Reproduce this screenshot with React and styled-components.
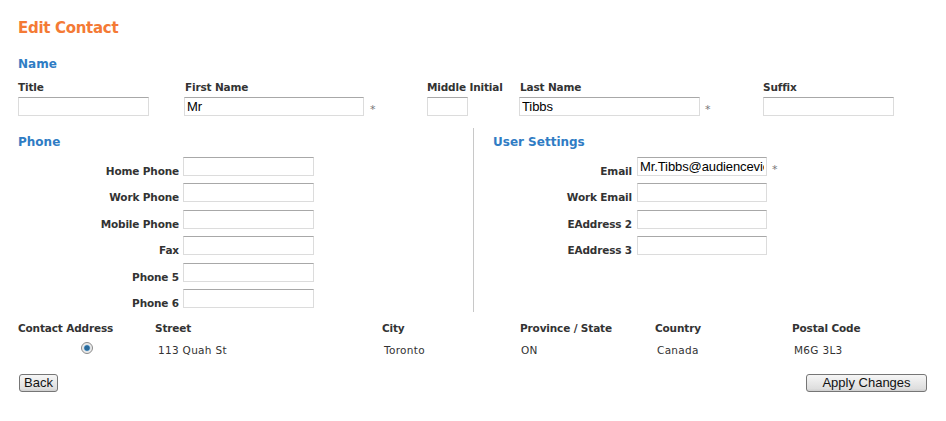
import React from "react";
import styled, { createGlobalStyle } from "styled-components";

const Global = createGlobalStyle`
  html, body { margin: 0; padding: 0; background: #fff; }
  body { font-family: "DejaVu Sans", Verdana, sans-serif; color: #333; }
  * { box-sizing: border-box; }
`;

const Page = styled.div`
  padding: 18px 19px 20px 18px;
  width: 946px;
`;

const Title = styled.h1`
  margin: 0;
  font-size: 15px;
  line-height: 20px;
  font-weight: bold;
  letter-spacing: -0.3px;
  color: #f47a35;
`;

const SectionHead = styled.h2`
  margin: ${(p) => p.$mt || 0}px 0 0 0;
  font-size: 12px;
  line-height: 16px;
  font-weight: bold;
  color: #2f7cc4;
`;

const NameGrid = styled.div`
  margin-top: 8px;
  display: grid;
  grid-template-columns: 166px 243px 92px 244px 1fr;
  row-gap: 3px;
`;

const Label = styled.label`
  font-size: 10.5px;
  line-height: 14px;
  font-weight: bold;
  letter-spacing: -0.15px;
  color: #333;
  white-space: nowrap;
  padding-left: ${(p) => p.$pl || 0}px;
`;

const FieldWrap = styled.div`
  display: flex;
  align-items: center;
`;

const TextInput = styled.input`
  width: ${(p) => p.$w}px;
  height: 19px;
  margin: 0;
  padding: 0 2px;
  border: 1px solid #dcdcdc;
  border-top-color: #a8a8a8;
  font-family: "Liberation Sans", Arial, sans-serif;
  font-size: 13px;
  letter-spacing: -0.1px;
  color: #000;
  background: #fff;
  outline: none;
`;

const Req = styled.span`
  margin-left: ${(p) => p.$ml ?? 6}px;
  margin-top: 6px;
  font-size: 11px;
  color: #777;
`;

const Split = styled.div`
  margin-top: 12px;
  display: grid;
  grid-template-columns: 455px 1px 1fr;
`;

const Divider = styled.div`
  background: #c8c8c8;
`;

const Panel = styled.div`
  padding: 6px 0 4px ${(p) => p.$pl || 0}px;
`;

const FormGrid = styled.div`
  margin-top: 7px;
  display: grid;
  grid-template-columns: ${(p) => p.$lw}px auto;
  column-gap: ${(p) => p.$gap}px;
  row-gap: 7.4px;
  align-items: end;
  justify-content: start;
`;

const RowLabel = styled(Label)`
  text-align: right;
  line-height: 13px;
  margin-bottom: -2px;
`;

const AddressTable = styled.div`
  margin-top: 9px;
  display: grid;
  grid-template-columns: 137px 227px 138px 135px 137px 1fr;
  row-gap: 8px;
`;

const HeadCell = styled.div`
  font-size: 10.5px;
  line-height: 14px;
  font-weight: bold;
  letter-spacing: -0.15px;
  color: #333;
  white-space: nowrap;
`;

const Cell = styled.div`
  font-size: 10.5px;
  line-height: 14px;
  color: #333;
  padding-left: ${(p) => p.$pl ?? 2}px;
  letter-spacing: 0.3px;
  display: flex;
  align-items: center;
  justify-content: ${(p) => (p.$center ? "center" : "flex-start")};
`;

const Radio = styled.span`
  display: inline-block;
  width: 12px;
  height: 12px;
  border-radius: 50%;
  border: 1px solid #8a8a8a;
  background: radial-gradient(circle, #2a6a9a 0 2.3px, #7ab0d8 2.9px, #e6e6e6 3.6px, #fafafa 100%);
  margin-top: -4px;
`;

const Buttons = styled.div`
  margin-top: 17px;
  display: flex;
  justify-content: space-between;
  padding-left: 1px;
`;

const Button = styled.button`
  height: 18px;
  width: ${(p) => p.$w}px;
  padding: 0;
  border: 1px solid #767676;
  border-radius: 3px;
  background: linear-gradient(#f6f6f6, #dedede 85%, #cfcfcf);
  font-family: "Liberation Sans", Arial, sans-serif;
  font-size: 13px;
  line-height: 16px;
  color: #111;
`;

const phones = ["Home Phone", "Work Phone", "Mobile Phone", "Fax", "Phone 5", "Phone 6"];
const emails = [
  { label: "Email", value: "Mr.Tibbs@audienceview.com", req: true },
  { label: "Work Email" },
  { label: "EAddress 2" },
  { label: "EAddress 3" },
];

export default function App() {
  return (
    <>
      <Global />
      <Page>
        <Title>Edit Contact</Title>
        <SectionHead $mt={18}>Name</SectionHead>
        <NameGrid>
          <Label>Title</Label>
          <Label $pl={1}>First Name</Label>
          <Label>Middle Initial</Label>
          <Label $pl={1}>Last Name</Label>
          <Label>Suffix</Label>
          <FieldWrap><TextInput $w={131} /></FieldWrap>
          <FieldWrap><TextInput $w={180} defaultValue="Mr" /><Req>*</Req></FieldWrap>
          <FieldWrap><TextInput $w={41} /></FieldWrap>
          <FieldWrap><TextInput $w={181} defaultValue="Tibbs" /><Req $ml={5}>*</Req></FieldWrap>
          <FieldWrap><TextInput $w={131} /></FieldWrap>
        </NameGrid>

        <Split>
          <Panel>
            <SectionHead>Phone</SectionHead>
            <FormGrid $lw={161} $gap={4}>
              {phones.map((p) => (
                <React.Fragment key={p}>
                  <RowLabel>{p}</RowLabel>
                  <TextInput $w={131} />
                </React.Fragment>
              ))}
            </FormGrid>
          </Panel>
          <Divider />
          <Panel $pl={19}>
            <SectionHead>User Settings</SectionHead>
            <FormGrid $lw={139} $gap={5}>
              {emails.map((e) => (
                <React.Fragment key={e.label}>
                  <RowLabel>{e.label}</RowLabel>
                  <FieldWrap>
                    <TextInput $w={130} defaultValue={e.value || ""} />
                    {e.req && <Req $ml={5}>*</Req>}
                  </FieldWrap>
                </React.Fragment>
              ))}
            </FormGrid>
          </Panel>
        </Split>

        <AddressTable>
          <HeadCell>Contact Address</HeadCell>
          <HeadCell>Street</HeadCell>
          <HeadCell>City</HeadCell>
          <HeadCell>Province / State</HeadCell>
          <HeadCell>Country</HeadCell>
          <HeadCell>Postal Code</HeadCell>
          <Cell $center $pl={0}><Radio /></Cell>
          <Cell $pl={3}>113 Quah St</Cell>
          <Cell>Toronto</Cell>
          <Cell $pl={1}>ON</Cell>
          <Cell>Canada</Cell>
          <Cell>M6G 3L3</Cell>
        </AddressTable>

        <Buttons>
          <Button $w={39}>Back</Button>
          <Button $w={121}>Apply Changes</Button>
        </Buttons>
      </Page>
    </>
  );
}
